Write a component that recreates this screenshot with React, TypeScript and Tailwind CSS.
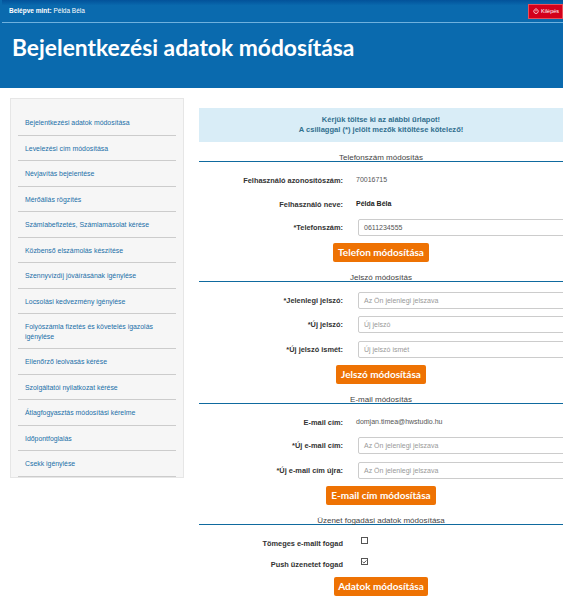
import { ReactNode } from "react";
import { Power, Check } from "lucide-react";

const menu = [
  "Bejelentkezési adatok módosítása",
  "Levelezési cím módosítása",
  "Névjavítás bejelentése",
  "Mérőállás rögzítés",
  "Számlabefizetés, Számlamásolat kérése",
  "Közbenső elszámolás készítése",
  "Szennyvízdíj jóváírásának igénylése",
  "Locsolási kedvezmény igénylése",
  "Folyószámla fizetés és követelés igazolás igénylése",
  "Ellenőrző leolvasás kérése",
  "Szolgáltatói nyilatkozat kérése",
  "Átlagfogyasztás módosítási kérelme",
  "Időpontfoglalás",
  "Csekk igénylése",
];

function SectionTitle({ children, className }: { children: ReactNode; className: string }) {
  return (
    <div className={`box-content h-[8px] border-b border-[#0f6a9f] text-center text-[8px] leading-[9px] text-[#444] ${className}`}>
      {children}
    </div>
  );
}

function Row({ label, className, children }: { label: string; className: string; children: ReactNode }) {
  return (
    <div className={`flex items-center ${className}`}>
      <div className="w-[144px] shrink-0 text-right text-[7.4px] font-bold text-[#333]">{label}</div>
      {children}
    </div>
  );
}

function Field({ value, placeholder }: { value?: string; placeholder?: string }) {
  return (
    <div className={`ml-[15px] h-[17px] w-[240px] shrink-0 rounded-[2px] border border-[#ccc] pl-[5px] text-[7px] leading-[15px] ${value ? "text-[#555]" : "text-[#999]"}`}>
      {value ?? placeholder}
    </div>
  );
}

function OrangeButton({ label, width, className }: { label: string; width: string; className: string }) {
  return (
    <div className={`mx-auto flex h-[19px] items-center justify-center whitespace-nowrap rounded-[2px] bg-[#ee7203] font-['Lato',sans-serif] text-[10px] font-bold text-white ${width} ${className}`}>
      {label}
    </div>
  );
}

export default function App() {
  return (
    <div className="h-[608px] w-[563px] overflow-hidden bg-white font-['Liberation_Sans',sans-serif]">
      {/* Header */}
      <header className="h-[88px] bg-[#0a6aae]">
        <div className="ml-[2px] flex h-[23px] items-center justify-between border-b border-[#6fb1de] bg-gradient-to-b from-[#03529a] to-[#0a6aae] to-[25%] pl-[7px]">
          <p className="text-[6.5px] text-white"><b>Belépve mint:</b> Példa Béla</p>
          <div className="flex h-[15px] w-[35px] items-center gap-[2px] border border-[#e8505a] bg-[#d3001b] pl-[4px] text-[5.5px] text-white">
            <Power size={6} strokeWidth={3} />
            Kilépés
          </div>
        </div>
        <h1 className="ml-[12px] mt-[12px] font-['Lato',sans-serif] text-[22.8px] font-bold leading-[24px] text-white">Bejelentkezési adatok módosítása</h1>
      </header>

      <div className="flex items-start">
        {/* Sidebar */}
        <nav className="ml-[10px] mt-[10px] w-[174px] shrink-0 border border-[#e6e6e6] bg-[#f6f6f6] px-[7px] pt-[11px]">
          {menu.map((item) => (
            <div key={item} className="border-b border-[#ccc] pt-[8px] pb-[7px] pl-[7px] pr-[4px] text-[6.9px] leading-[9.5px] text-[#1a6fa8]">
              {item}
            </div>
          ))}
        </nav>

        {/* Form */}
        <main className="ml-[15px] w-[364px] shrink-0 pt-[20px]">
          <div className="flex h-[34px] flex-col items-center justify-center bg-[#d9edf7] text-[7.55px] font-bold leading-[10px] text-[#31708f]">
            <p>Kérjük töltse ki az alábbi űrlapot!</p>
            <p>A csillaggal (*) jelölt mezők kitöltése kötelező!</p>
          </div>

          <SectionTitle className="mt-[11px]">Telefonszám módosítás</SectionTitle>
          <Row label="Felhasználó azonosítószám:" className="mt-[12px] h-[13px]">
            <span className="ml-[13px] text-[7px] text-[#555]">70016715</span>
          </Row>
          <Row label="Felhasználó neve:" className="mt-[11px] h-[13px]">
            <span className="ml-[13px] text-[7px] font-bold text-[#222]">Példa Béla</span>
          </Row>
          <Row label="*Telefonszám:" className="mt-[8px]">
            <Field value="0611234555" />
          </Row>
          <OrangeButton label="Telefon módosítása" width="w-[96px]" className="mt-[7px]" />

          <SectionTitle className="mt-[11px]">Jelszó módosítás</SectionTitle>
          <Row label="*Jelenlegi jelszó:" className="mt-[10px]">
            <Field placeholder="Az Ön jelenlegi jelszava" />
          </Row>
          <Row label="*Új jelszó:" className="mt-[7px]">
            <Field placeholder="Új jelszó" />
          </Row>
          <Row label="*Új jelszó ismét:" className="mt-[8px]">
            <Field placeholder="Új jelszó ismét" />
          </Row>
          <OrangeButton label="Jelszó módosítása" width="w-[90px]" className="mt-[7px]" />

          <SectionTitle className="mt-[11px]">E-mail módosítás</SectionTitle>
          <Row label="E-mail cím:" className="mt-[12px] h-[13px]">
            <span className="ml-[13px] text-[7px] text-[#555]">domjan.timea@hwstudio.hu</span>
          </Row>
          <Row label="*Új e-mail cím:" className="mt-[8px]">
            <Field placeholder="Az Ön jelenlegi jelszava" />
          </Row>
          <Row label="*Új e-mail cím újra:" className="mt-[8px]">
            <Field placeholder="Az Ön jelenlegi jelszava" />
          </Row>
          <OrangeButton label="E-mail cím módosítása" width="w-[110px]" className="mt-[7px]" />

          <SectionTitle className="mt-[11px]">Üzenet fogadási adatok módosítása</SectionTitle>
          <Row label="Tömeges e-mailt fogad" className="mt-[12px] h-[13px]">
            <span className="relative top-[-3px] ml-[18px] h-[7px] w-[7px] border border-[#555] bg-white" />
          </Row>
          <Row label="Push üzenetet fogad" className="mt-[8px] h-[13px]">
            <span className="relative top-[-3px] ml-[18px] flex h-[7px] w-[7px] items-center justify-center border border-[#555] bg-white text-[#333]">
              <Check size={6} strokeWidth={4} />
            </span>
          </Row>
          <OrangeButton label="Adatok módosítása" width="w-[94px]" className="mt-[6px]" />
        </main>
      </div>
    </div>
  );
}
